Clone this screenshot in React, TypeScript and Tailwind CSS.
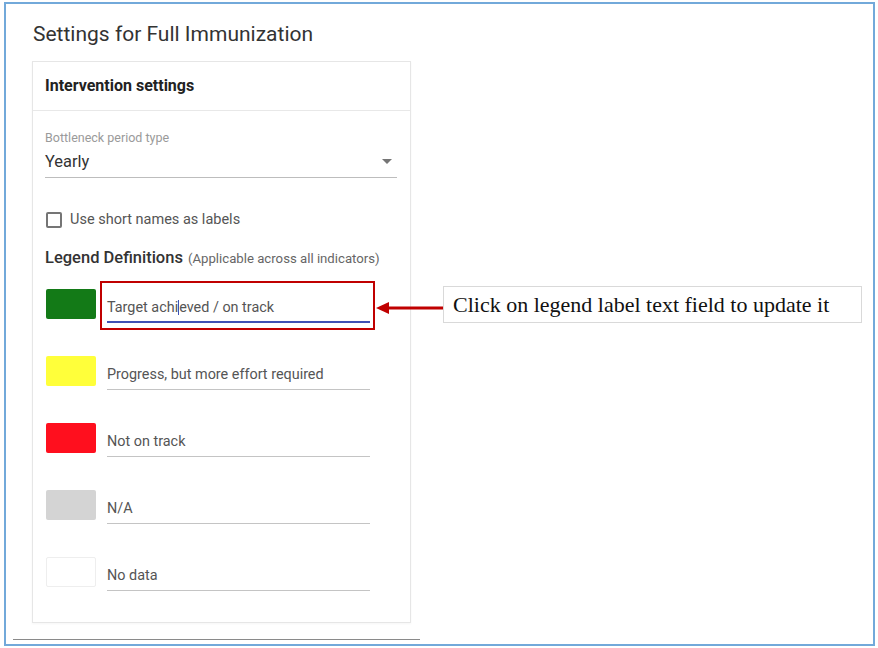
import React from 'react';

const legend = [
  { color: 'bg-[#137a17]', label: 'Target achieved / on track', focused: true },
  { color: 'bg-[#ffff3a]', label: 'Progress, but more effort required' },
  { color: 'bg-[#ff0f1e]', label: 'Not on track' },
  { color: 'bg-[#d4d4d4]', label: 'N/A' },
  { color: 'bg-white border border-[#eeeeee]', label: 'No data' },
];

const LegendRow: React.FC<{ color: string; label: string; focused?: boolean }> = ({ color, label, focused }) => (
  <div className="flex items-start h-[35px]">
    <div className={`w-[50px] h-[30px] rounded-[2px] ${color}`} />
    <div
      className={`ml-[11px] w-[263px] pt-[9px] text-[14.4px] leading-[20px] text-[#555] ${
        focused ? 'border-b-2 border-[#3f51b5] pb-[3px]' : 'border-b border-[#c4c4c4] pb-[4px]'
      }`}
    >
      {focused ? (
        <>
          Target achi
          <span className="inline-block w-px h-[15px] bg-[#3f51b5] align-[-3px]" />
          eved / on track
        </>
      ) : (
        label
      )}
    </div>
  </div>
);

export default function App() {
  return (
    <div className="w-[878px] h-[648px] bg-white pt-[2px] pl-[4px] font-['Roboto',sans-serif]">
      <div className="relative w-[871px] h-[644px] border-2 border-[#72a9da]">
        <h1 className="mt-[16px] ml-[27px] text-[21px] leading-[28px] text-[#333]">Settings for Full Immunization</h1>

        {/* card */}
        <div className="ml-[26px] mt-[13px] w-[379px] h-[562px] border border-[#e6e6e6] shadow-[0_1px_2px_rgba(0,0,0,0.04)]">
          <div className="h-[49px] flex items-center pl-[12px] border-b border-[#e8e8e8] text-[16px] font-bold text-[#222]">
            Intervention settings
          </div>
          <div className="px-[12px]">
            <div className="pt-[20px] text-[12.5px] leading-[14px] text-[#9a9a9a]">Bottleneck period type</div>
            <div className="mt-[5px] w-[352px] flex items-center justify-between pb-[4px] border-b border-[#bdbdbd] text-[16.4px] leading-[23px] text-[#333]">
              <span>Yearly</span>
              <svg width="10" height="5" viewBox="0 0 10 5" className="mr-[5px]">
                <path d="M0 0 L10 0 L5 5 Z" fill="#757575" />
              </svg>
            </div>

            <div className="mt-[32px] h-[20px] flex items-center">
              <div className="w-[16px] h-[16px] ml-[1px] border-2 border-[#757575] rounded-[2px]" />
              <span className="ml-[8px] text-[14.5px] text-[#555]">Use short names as labels</span>
            </div>

            <div className="mt-[16px] h-[20px] flex items-baseline">
              <span className="text-[16.5px] font-medium text-[#333]">Legend Definitions</span>
              <span className="ml-[5px] text-[13.2px] text-[#666]">(Applicable across all indicators)</span>
            </div>

            <div className="mt-[23px] ml-[1px] flex flex-col gap-[32px]">
              {legend.map((l) => (
                <LegendRow key={l.label} color={l.color} label={l.label} focused={l.focused} />
              ))}
            </div>
          </div>
        </div>

        <div className="ml-[7px] mt-[16px] w-[407px] border-t border-[#8a8a8a]" />

        {/* annotation */}
        <div className="absolute left-[94px] top-[277px] w-[275px] h-[49px] border-2 border-[#c00000]" />
        <svg className="absolute left-[369px] top-[296px]" width="68" height="16" viewBox="0 0 68 16">
          <line x1="10" y1="8" x2="68" y2="8" stroke="#c00000" strokeWidth="3" />
          <path d="M1 8 L14 2 L14 14 Z" fill="#c00000" />
        </svg>
        <div className="absolute left-[437px] top-[282px] w-[419px] h-[37px] border border-[#d9d9d9] flex items-center pl-[9px] font-['Liberation_Serif',serif] text-[22px] text-[#111]">
          Click on legend label text field to update it
        </div>
      </div>
    </div>
  );
}
